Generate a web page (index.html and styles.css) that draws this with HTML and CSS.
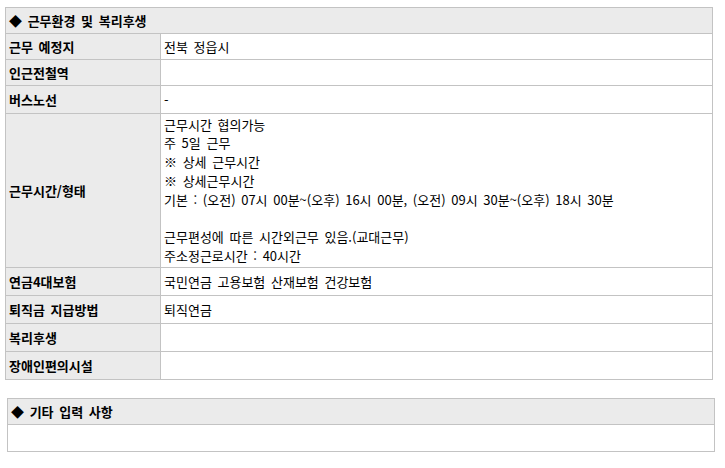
FILE: index.html
```html
<!DOCTYPE html>
<html lang="ko">
<head>
<meta charset="utf-8">
<link rel="stylesheet" href="styles.css">
</head>
<body>
<div class="page">
  <table class="info info-main">
    <colgroup><col class="col-label"><col class="col-value"></colgroup>
    <tr><th class="sec-head" colspan="2">◆ 근무환경 및 복리후생</th></tr>
    <tr><th class="label">근무 예정지</th><td class="value">전북 정읍시</td></tr>
    <tr><th class="label">인근전철역</th><td class="value"></td></tr>
    <tr class="tall1"><th class="label">버스노선</th><td class="value">-</td></tr>
    <tr>
      <th class="label">근무시간/형태</th>
      <td class="value multi">근무시간 협의가능<br>주 5일 근무<br>※ 상세 근무시간<br>※ 상세근무시간<br>기본 : (오전) 07시 00분~(오후) 16시 00분, (오전) 09시 30분~(오후) 18시 30분<br><br>근무편성에 따른 시간외근무 있음.(교대근무)<br>주소정근로시간 : 40시간</td>
    </tr>
    <tr class="tall1"><th class="label">연금4대보험</th><td class="value">국민연금 고용보험 산재보험 건강보험</td></tr>
    <tr class="tall1"><th class="label">퇴직금 지급방법</th><td class="value">퇴직연금</td></tr>
    <tr class="tall1"><th class="label">복리후생</th><td class="value"></td></tr>
    <tr class="tall1"><th class="label">장애인편의시설</th><td class="value"></td></tr>
  </table>

  <table class="info info-extra">
    <tr><th class="sec-head">◆ 기타 입력 사항</th></tr>
    <tr class="body-row"><td class="value"></td></tr>
  </table>
</div>
</body>
</html>
```

FILE: styles.css
```css
html, body {
  margin: 0;
  padding: 0;
  background: #ffffff;
}

.page {
  padding: 7px 0 0 5px;
  font-family: "Noto Sans CJK KR", "Noto Sans", sans-serif;
  font-size: 13px;
  word-spacing: 2px;
  color: #000000;
}

.info {
  border-collapse: collapse;
  table-layout: fixed;
}

.info th,
.info td {
  border: 1px solid #c3c3c3;
  height: 26px;
  line-height: 17px;
  padding: 0 3px;
  text-align: left;
  vertical-align: middle;
  white-space: nowrap;
  box-sizing: border-box;
}

.info-main {
  width: 708px;
}

.col-label {
  width: 155px;
}

.info-extra {
  width: 708px;
  margin: 18px 0 0 2px;
}

.sec-head {
  background: #ebebeb;
  font-weight: bold;
  padding-left: 4px;
}

.label {
  background: #ebebeb;
  font-weight: bold;
  padding-left: 4px;
}

.value {
  background: #ffffff;
  font-weight: normal;
}

.tall1 th,
.tall1 td {
  height: 28px;
}

.body-row td {
  height: 27px;
}

.info .multi {
  height: 154px;
  padding-top: 0;
  padding-bottom: 0;
  line-height: 18.75px;
}
```
